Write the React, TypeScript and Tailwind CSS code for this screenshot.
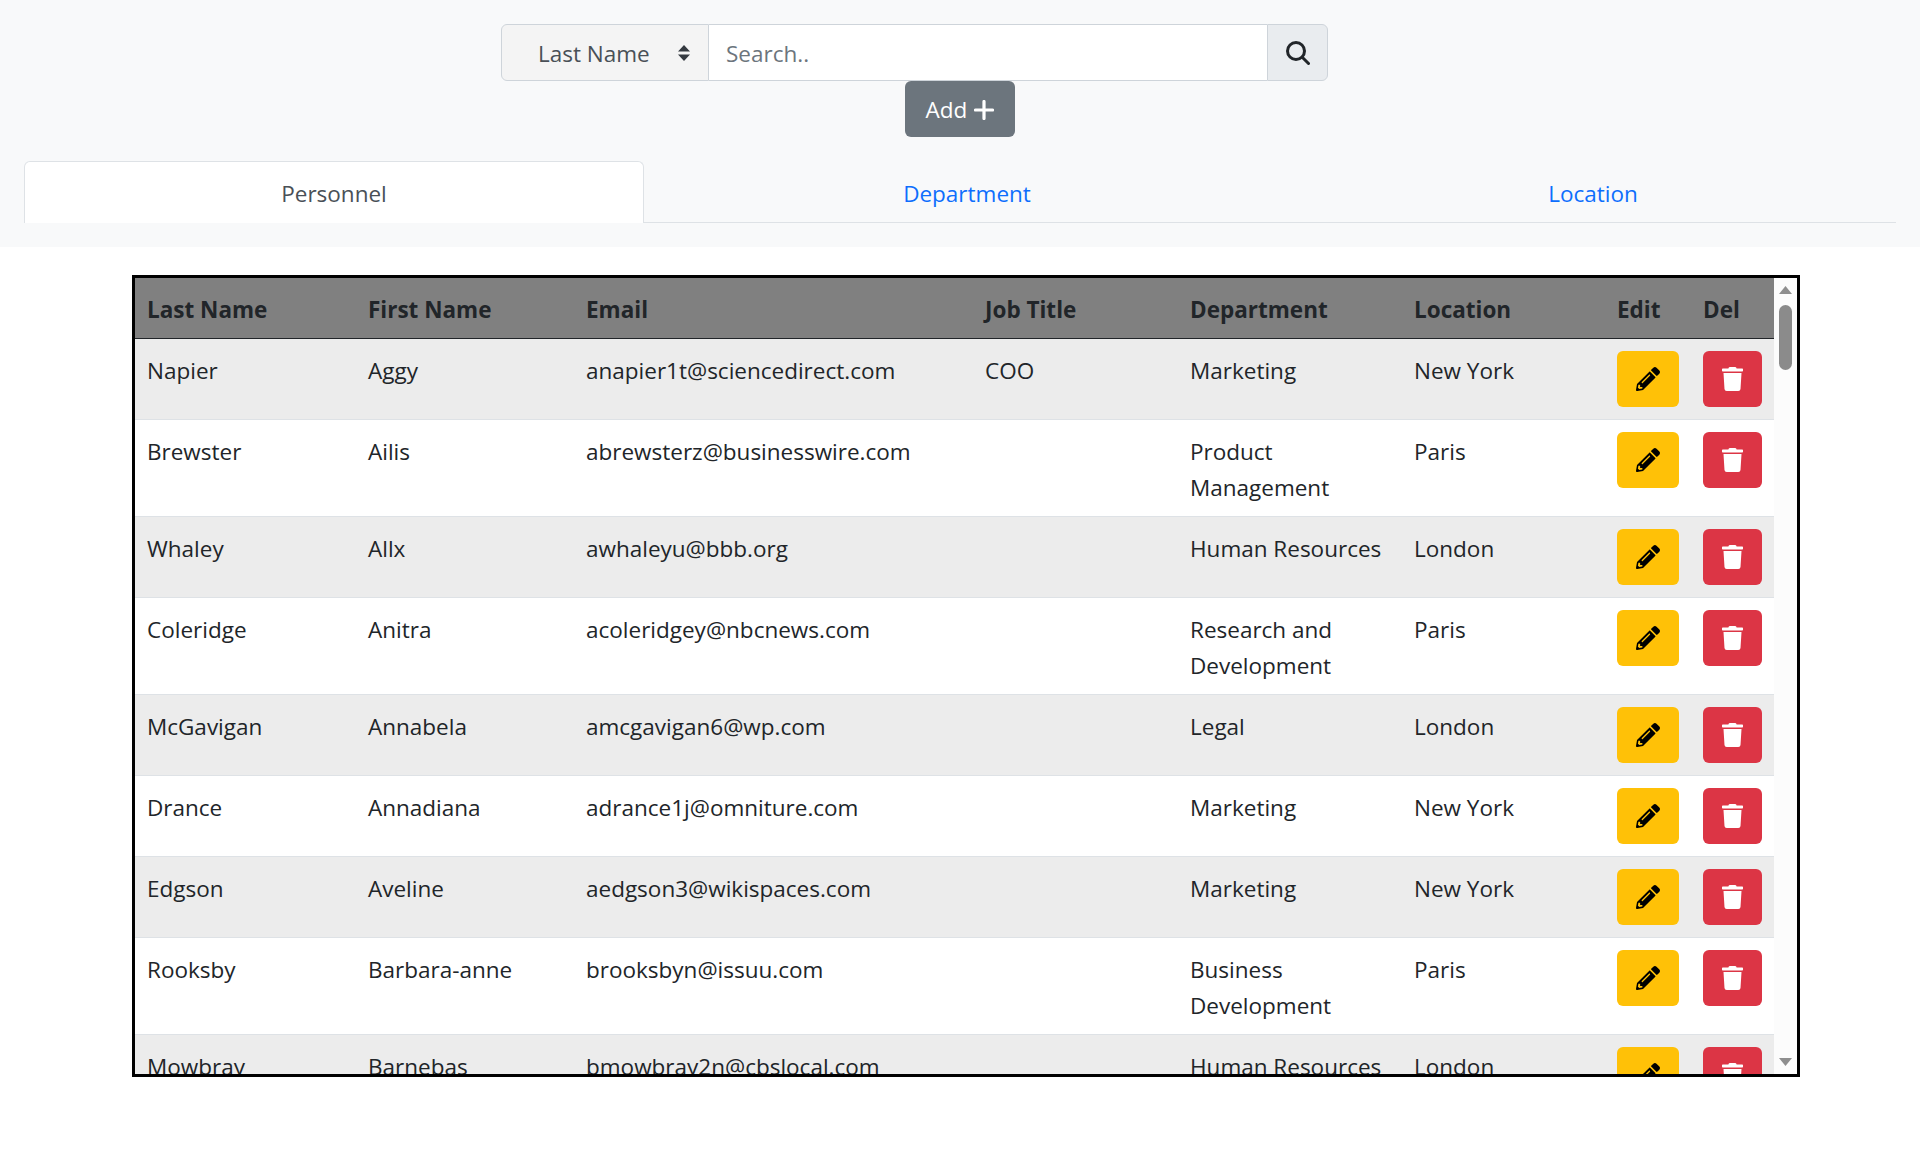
import { FaPencilAlt, FaTrash } from "react-icons/fa";

const widths = [
  "w-[221px]", "w-[218px]", "w-[399px]", "w-[205px]", "w-[224px]", "w-[203px]", "w-[86px]", "w-[83px]",
];
const headers = ["Last Name", "First Name", "Email", "Job Title", "Department", "Location", "Edit", "Del"];
const rows: [string, string, string, string, string, string][] = [
  ["Napier", "Aggy", "anapier1t@sciencedirect.com", "COO", "Marketing", "New York"],
  ["Brewster", "Ailis", "abrewsterz@businesswire.com", "", "Product Management", "Paris"],
  ["Whaley", "Allx", "awhaleyu@bbb.org", "", "Human Resources", "London"],
  ["Coleridge", "Anitra", "acoleridgey@nbcnews.com", "", "Research and Development", "Paris"],
  ["McGavigan", "Annabela", "amcgavigan6@wp.com", "", "Legal", "London"],
  ["Drance", "Annadiana", "adrance1j@omniture.com", "", "Marketing", "New York"],
  ["Edgson", "Aveline", "aedgson3@wikispaces.com", "", "Marketing", "New York"],
  ["Rooksby", "Barbara-anne", "brooksbyn@issuu.com", "", "Business Development", "Paris"],
  ["Mowbray", "Barnebas", "bmowbray2n@cbslocal.com", "", "Human Resources", "London"],
];

export default function App() {
  return (
    <div className="min-h-[1154px] bg-white font-['Open_Sans',sans-serif] text-[22.5px] leading-[36px] text-[#212529]">
      <div className="h-[247px] bg-[#f8f9fa] px-6 pt-6">
        <div className="ml-[477px] flex h-[57px] w-[827px]">
          <div className="flex w-[208px] items-center justify-between rounded-l-[6px] border border-[#ced4da] bg-[#f4f4f4] pl-[36px] pr-[18px] pt-[3px] text-[#495057]">
            <span>Last Name</span>
            <svg className="-mt-[3px]" width="12" height="16" viewBox="0 0 12 16" fill="#343a40"><path d="M6 0 12 6.5H0zM6 16 0 9.5h12z" /></svg>
          </div>
          <div className="flex w-[558px] items-center border-y border-[#ced4da] bg-white pl-[17px] pt-[3px] text-[#6c757d]">Search..</div>
          <div className="flex w-[61px] items-center justify-center rounded-r-[6px] border border-[#ced4da] bg-[#e9ecef]">
            <svg width="24" height="24" viewBox="0 0 24 24" fill="none" stroke="#212529" strokeWidth="3" strokeLinecap="round"><circle cx="10" cy="10" r="8.5" /><path d="M16.5 16.5 22.5 22.5" /></svg>
          </div>
        </div>
        <div className="flex justify-center">
          <div className="flex h-[56px] w-[110px] items-center justify-center gap-[7px] rounded-[6px] bg-[#6c757d] pt-px text-white">
            <span>Add</span>
            <svg width="20" height="20" viewBox="0 0 20 20" stroke="#fff" strokeWidth="3.2" strokeLinecap="round"><path d="M10 1.5v17M1.5 10h17" /></svg>
          </div>
        </div>
        <div className="mt-6 flex h-[62px] border-b border-[#dee2e6]">
          <div className="-mb-px flex w-[620px] justify-center rounded-t-[6px] border border-b-0 border-[#dee2e6] bg-white pt-[14px] text-[#495057]">Personnel</div>
          <div className="flex w-[646px] justify-center pt-[15px] text-[#0d6efd]">Department</div>
          <div className="flex w-[606px] justify-center pt-[15px] text-[#0d6efd]">Location</div>
        </div>
      </div>
      <div className="ml-[132px] mt-7 flex h-[802px] w-[1668px] border-[3px] border-black">
        <div className="h-full w-[1639px] overflow-hidden">
          <table className="w-[1639px] table-fixed border-collapse">
            <colgroup>
              {widths.map((w, i) => <col key={i} className={w} />)}
            </colgroup>
            <thead>
              <tr className="border-b border-[#212529] bg-[#808080]">
                {headers.map((h) => (
                  <th key={h} className="h-[60px] px-3 pb-[10px] pt-[14px] text-left align-top font-bold">{h}</th>
                ))}
              </tr>
            </thead>
            <tbody>
              {rows.map((r, i) => (
                <tr key={r[0]} className={(i % 2 === 0 ? "bg-[#ececec]" : "bg-white") + " border-b border-[#dee2e6]"}>
                  {r.map((c, j) => (
                    <td key={j} className="px-3 pb-[10px] pt-[14px] align-top">{c}</td>
                  ))}
                  <td className="px-3 py-3 align-top">
                    <div className="flex h-14 w-[62px] items-center justify-center rounded-[6px] bg-[#ffc107] text-black">
                      <FaPencilAlt className="h-6 w-6" />
                    </div>
                  </td>
                  <td className="px-3 py-3 align-top">
                    <div className="flex h-14 w-[59px] items-center justify-center rounded-[6px] bg-[#dc3545] text-white">
                      <FaTrash className="h-6 w-[21px]" />
                    </div>
                  </td>
                </tr>
              ))}
            </tbody>
          </table>
        </div>
        <div className="flex h-full w-[23px] flex-col items-center bg-[#fcfcfc]">
          <svg className="mt-2" width="13" height="8" viewBox="0 0 13 8" fill="#8f8f8f"><path d="M6.5 0 13 8H0z" /></svg>
          <div className="mt-[11px] h-[65px] w-[13px] rounded-full bg-[#8b8b8b]" />
          <svg className="mb-2 mt-auto" width="13" height="8" viewBox="0 0 13 8" fill="#8f8f8f"><path d="M6.5 8 0 0h13z" /></svg>
        </div>
      </div>
    </div>
  );
}
